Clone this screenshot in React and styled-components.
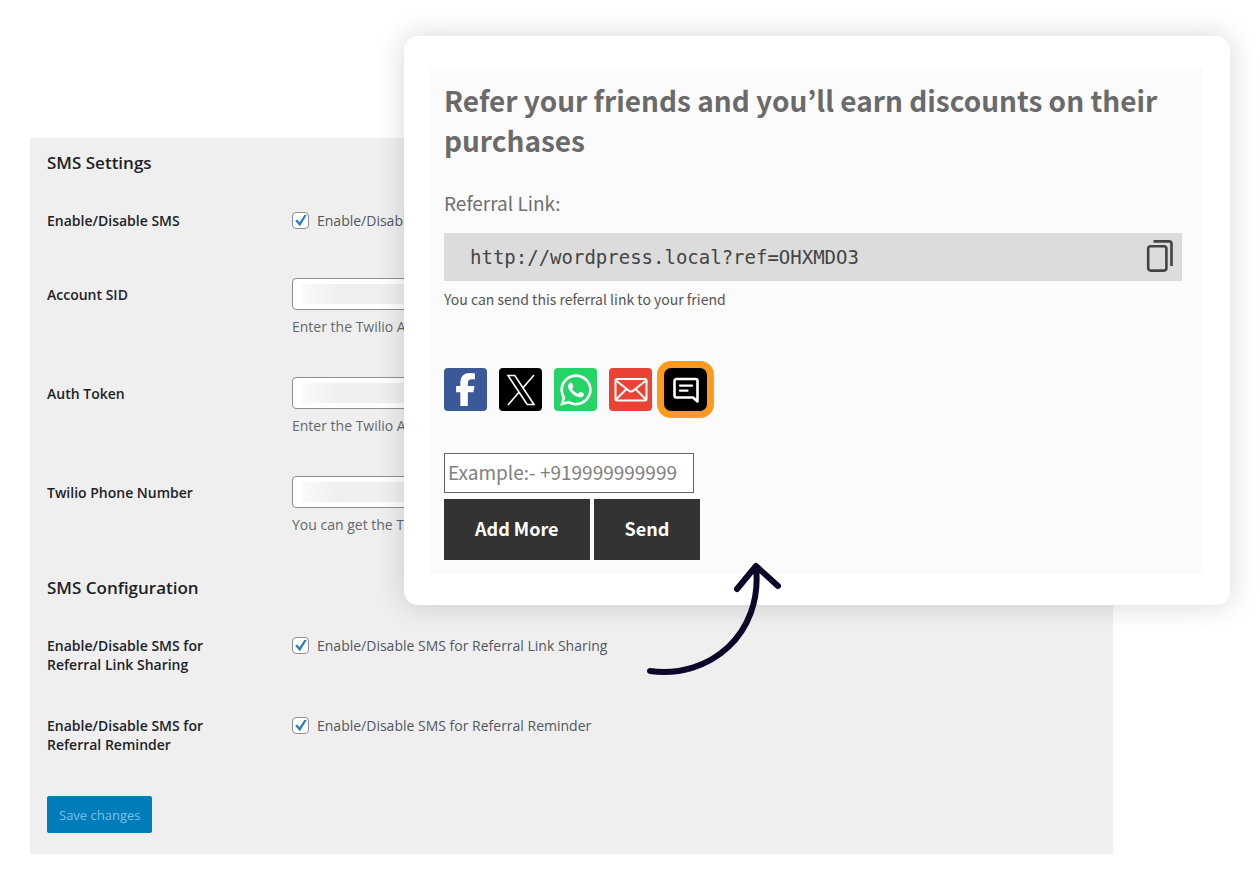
import React from "react"
import styled, { createGlobalStyle, css } from "styled-components"
import { FaFacebookF, FaWhatsapp } from "react-icons/fa6"

const adminFont = `"Open Sans", "Noto Sans", sans-serif`
const cardFont = `"Noto Sans CJK KR", "Noto Sans", sans-serif`

const credentials = [
  {
    id: "account-sid",
    label: "Account SID",
    help: "Enter the Twilio Account SID",
  },
  {
    id: "auth-token",
    label: "Auth Token",
    help: "Enter the Twilio Auth Token",
  },
  {
    id: "phone-number",
    label: "Twilio Phone Number",
    help: "You can get the Twilio",
  },
]

const notifications = [
  {
    id: "sms-sharing",
    label: "Enable/Disable SMS for Referral Link Sharing",
  },
  {
    id: "sms-reminder",
    label: "Enable/Disable SMS for Referral Reminder",
  },
]

const CheckField = ({ id, label }) => (
  <Row>
    <RowLabel htmlFor={id}>{label}</RowLabel>
    <CheckLabel>
      <Checkbox id={id} type="checkbox" defaultChecked />
      {label}
    </CheckLabel>
  </Row>
)

const TextField = ({ id, label, help }) => (
  <Row>
    <RowLabel htmlFor={id}>{label}</RowLabel>
    <div>
      <TextInput id={id} type="text" />
      <Help>{help}</Help>
    </div>
  </Row>
)

const Settings = () => (
  <Panel>
    <Group>
      <GroupTitle>SMS Settings</GroupTitle>
      <Rows gap="41px">
        <CheckField id="sms-enabled" label="Enable/Disable SMS" />
        {credentials.map(field => (
          <TextField key={field.id} {...field} />
        ))}
      </Rows>
    </Group>
    <Group>
      <GroupTitle>SMS Configuration</GroupTitle>
      <Rows gap="28px">
        {notifications.map(field => (
          <CheckField key={field.id} {...field} />
        ))}
      </Rows>
    </Group>
    <SaveButton type="button">Save changes</SaveButton>
  </Panel>
)

const CopyIcon = () => (
  <svg width="28" height="34" viewBox="0 0 28 34" fill="none" stroke="#444" strokeWidth="2.6">
    <rect x="2.2" y="6.2" width="18.2" height="24.4" rx="2.5" />
    <path d="M7.5 1.4H23a2.5 2.5 0 0 1 2.5 2.5V26" />
  </svg>
)

const XIcon = () => (
  <svg width="30" height="32" viewBox="0 0 30 32" fill="none" stroke="#fff" strokeWidth="1.6">
    <path d="M2 1.5H8.8L28 30.5H21.2Z" />
    <path d="M28 1 16.6 14.2M13.2 18 2 31" />
  </svg>
)

const MailIcon = () => (
  <svg width="34" height="26" viewBox="0 0 34 26" fill="none" stroke="#fff" strokeWidth="2" strokeLinejoin="round">
    <rect x="1.5" y="2" width="31" height="21.5" rx="1.5" />
    <path d="M2 3.5 14 13Q17 16 20 13L32 3.5M2 22.5 12.5 12M32 22.5 21.5 12" />
  </svg>
)

const MessageIcon = () => (
  <svg width="28" height="28" viewBox="0 0 28 28" fill="none" stroke="#fff" strokeWidth="2.6" strokeLinejoin="round" strokeLinecap="round">
    <path d="M4.5 3H23.5a2 2 0 0 1 2 2V25.5L21 21.5H4.5a2 2 0 0 1-2-2V5a2 2 0 0 1 2-2Z" />
    <path d="M8 9.7H20M8 14.7H15.5" strokeWidth="2.2" />
  </svg>
)

const ReferralCard = () => (
  <Card>
    <CardBody>
      <Headline>
        Refer your friends and you’ll earn discounts on their purchases
      </Headline>
      <LinkCaption>Referral Link:</LinkCaption>
      <LinkBar>
        http://wordpress.local?ref=OHXMDO3
        <CopyButton type="button" aria-label="Copy">
          <CopyIcon />
        </CopyButton>
      </LinkBar>
      <LinkNote>You can send this referral link to your friend</LinkNote>
      <Shares>
        <Share type="button" aria-label="Facebook" color="#3b5998">
          <FaFacebookF size={33} />
        </Share>
        <Share type="button" aria-label="X" color="#000">
          <XIcon />
        </Share>
        <Share type="button" aria-label="WhatsApp" color="#25d366">
          <FaWhatsapp size={36} />
        </Share>
        <Share type="button" aria-label="Email" color="#ea4335">
          <MailIcon />
        </Share>
        <Share type="button" aria-label="SMS" color="#000" $active>
          <MessageIcon />
        </Share>
      </Shares>
      <PhoneInput
        type="tel"
        aria-label="Phone number"
        placeholder="Example:- +919999999999"
      />
      <Actions>
        <ActionButton type="button">Add More</ActionButton>
        <ActionButton type="button">Send</ActionButton>
      </Actions>
    </CardBody>
    <Arrow viewBox="0 0 140 122" aria-hidden="true">
      <path d="M6 113C66 121 119 76 112 9M93 31 112 8 134 28" />
    </Arrow>
  </Card>
)

export default function App() {
  return (
    <>
      <GlobalStyle />
      <Stage>
        <Settings />
        <ReferralCard />
      </Stage>
    </>
  )
}

const GlobalStyle = createGlobalStyle`
  *, *::before {
    box-sizing: border-box;
  }

  body {
    margin: 0;
    background: #fff;
  }

  h2, h3, p {
    margin: 0;
  }

  button, input {
    font-family: inherit;
  }
`

/* The card shares the middle column and the second row with the panel */
const Stage = styled.main`
  display: grid;
  grid-template-columns: 374px minmax(0, 1fr) 117px;
  grid-template-rows: 102px auto;
  padding: 36px 30px 34px;
`

const Panel = styled.form`
  grid-column: 1 / 3;
  grid-row: 2;
  padding: 13px 17px 21px;
  background: #efefef;
  color: #1d2327;
  font-family: ${adminFont};
  font-size: 14px;
  line-height: 19px;
`

const Group = styled.section`
  margin-bottom: 42px;

  & + & {
    margin-bottom: 35px;
  }
`

const GroupTitle = styled.h2`
  margin-bottom: 29px;
  font-size: 17px;
  line-height: 24px;
  font-weight: 600;
`

const Rows = styled.div`
  display: grid;
  row-gap: ${props => props.gap};
`

const Row = styled.div`
  display: grid;
  grid-template-columns: 160px minmax(0, 1fr);
  column-gap: 85px;
  align-items: start;
`

const RowLabel = styled.label`
  padding: 7px 0;
  font-weight: 600;
`

const CheckLabel = styled.label`
  display: flex;
  align-items: center;
  gap: 8px;
  padding: 7px 0;
  color: #50575e;
`

const Checkbox = styled.input`
  appearance: none;
  flex: none;
  width: 17px;
  height: 17px;
  margin: 0;
  border: 1px solid #8c8f94;
  border-radius: 4px;
  background: #fff;

  &:checked::before {
    content: "";
    display: block;
    width: 15px;
    height: 15px;
    background: #2b7fc4;
    clip-path: polygon(14% 51%, 28% 43%, 43% 61%, 76% 14%, 92% 14%, 46% 88%);
  }
`

const TextInput = styled.input`
  display: block;
  width: 400px;
  max-width: 100%;
  height: 32px;
  padding: 0 8px;
  border: 1px solid #8c8f94;
  border-radius: 4px;
  background: linear-gradient(90deg, #fbfbfb, #efefef 40px) center / calc(100% - 16px) 20px
    no-repeat #fff;
`

const Help = styled.p`
  margin-top: 7px;
  color: #646970;
`

const SaveButton = styled.button`
  display: block;
  height: 37px;
  padding: 0 12px;
  border: 0;
  border-radius: 2px;
  background: #007cba;
  color: #7cc0e4;
  font-size: 13px;
`

const Card = styled.section`
  position: relative;
  grid-column: 2 / 4;
  grid-row: 1 / 3;
  align-self: start;
  padding: 32px 27px 31px 26px;
  border-radius: 14px;
  background: #fff;
  box-shadow: 0 0 30px rgba(0, 0, 0, 0.16);
  font-family: ${cardFont};
`

const CardBody = styled.div`
  padding: 12px 21px 14px 14px;
  background: #fbfbfb;
`

const Headline = styled.h2`
  margin-bottom: 31px;
  color: #6a6a6a;
  font-size: 28px;
  line-height: 40px;
  font-weight: 700;
`

const LinkCaption = styled.h3`
  margin-bottom: 18px;
  color: #707070;
  font-size: 19px;
  line-height: 24px;
  font-weight: 400;
`

const LinkBar = styled.div`
  display: flex;
  align-items: center;
  justify-content: space-between;
  height: 48px;
  padding: 0 8px 0 26px;
  background: #dcdcdc;
  color: #444;
  font-family: "DejaVu Sans Mono", monospace;
  font-size: 19px;
`

const CopyButton = styled.button`
  display: flex;
  padding: 0;
  border: 0;
  background: none;
`

const LinkNote = styled.p`
  margin: 8px 0 59px;
  color: #555;
  font-size: 14px;
  line-height: 20px;
`

const Shares = styled.div`
  display: flex;
  gap: 12px;
  margin-bottom: 42px;
`

const Share = styled.button`
  display: flex;
  align-items: center;
  justify-content: center;
  width: 43px;
  height: 43px;
  padding: 0;
  border: 0;
  border-radius: 4px;
  background: ${props => props.color};
  color: #fff;

  ${props =>
    props.$active &&
    css`
      border-radius: 7px;
      box-shadow: 0 0 0 7px #ff9a1f;
    `}
`

const PhoneInput = styled.input`
  display: block;
  width: 250px;
  height: 40px;
  padding: 0 3px 3px;
  border: 1px solid #666;
  background: #fff;
  font-size: 19px;

  &::placeholder {
    color: #808080;
  }
`

const Actions = styled.div`
  display: flex;
  gap: 4px;
  margin-top: 6px;
`

const ActionButton = styled.button`
  height: 61px;
  padding: 0 31px 3px;
  border: 0;
  background: #333;
  color: #fff;
  font-size: 18px;
  font-weight: 700;
`

const Arrow = styled.svg`
  position: absolute;
  left: 240px;
  top: 522px;
  width: 140px;
  height: 122px;
  fill: none;
  stroke: #0d0628;
  stroke-width: 6;
  stroke-linecap: round;
  stroke-linejoin: round;
`
